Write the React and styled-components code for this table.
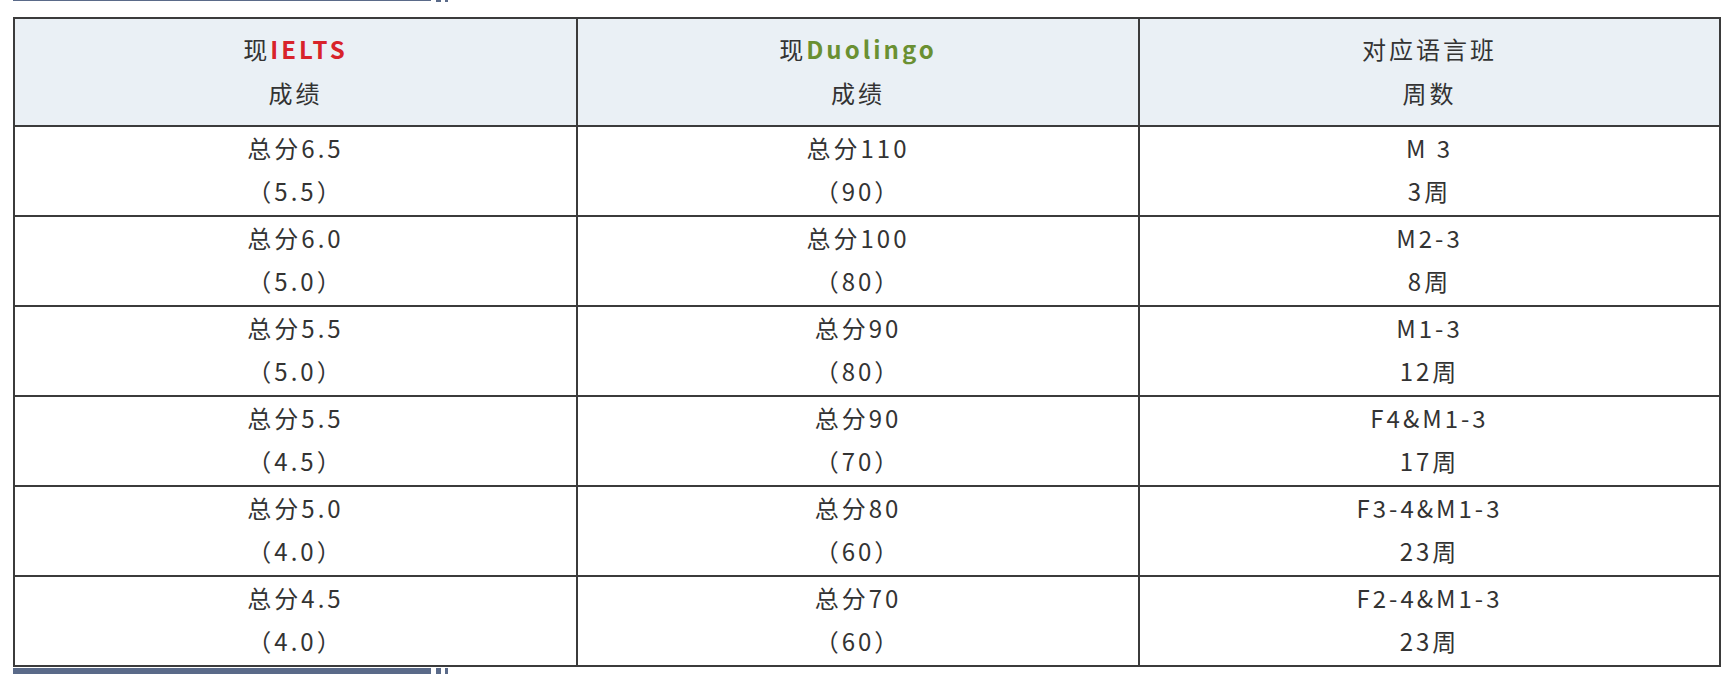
import React from 'react';
import styled, { createGlobalStyle } from 'styled-components';

const GlobalStyle = createGlobalStyle`
  html, body { margin: 0; padding: 0; background: #ffffff; }
  body { font-family: "Noto Sans CJK SC", "Noto Sans", sans-serif; }
`;

const Page = styled.div`
  width: 1732px;
  height: 674px;
  overflow: hidden;
  background: #ffffff;
  box-sizing: border-box;
  padding-left: 13px;
  display: flex;
  flex-direction: column;
`;

const Divider = styled.div`
  display: flex;
  align-items: flex-start;
  height: ${p => p.$h}px;
  margin-top: ${p => p.$mt || 0}px;
  flex-shrink: 0;
`;

const DividerBar = styled.div`
  width: 418px;
  height: ${p => p.$h}px;
  background: #5a6a89;
`;

const DividerMark = styled.div`
  width: ${p => p.$w}px;
  height: 100%;
  margin-left: ${p => p.$ml}px;
  background: #5a6a89;
`;

const Table = styled.div`
  margin-top: ${p => p.$mt}px;
  width: 1708px;
  box-sizing: border-box;
  display: grid;
  grid-template-columns: 561px 560px 579px;
  grid-template-rows: 106px;
  grid-auto-rows: 88px;
  gap: 2px;
  padding: 2px;
  background: #3b3b3b;
  flex-shrink: 0;
`;

const Cell = styled.div`
  background: ${p => (p.$head ? '#eaf0f5' : '#ffffff')};
  display: flex;
  flex-direction: column;
  align-items: center;
  justify-content: center;
  box-sizing: border-box;
  padding-bottom: ${p => (p.$head ? 2 : 5)}px;
  font-size: 24px;
  line-height: ${p => (p.$head ? 44 : 43)}px;
  letter-spacing: 3px;
  color: #333333;
  text-align: center;
`;

const Line = styled.div`
  white-space: nowrap;
`;

const Brand = styled.span`
  font-weight: 700;
  color: ${p => p.$color};
`;

const rows = [
  [['总分6.5', '（5.5）'], ['总分110', '（90）'], ['M 3', '3周']],
  [['总分6.0', '（5.0）'], ['总分100', '（80）'], ['M2-3', '8周']],
  [['总分5.5', '（5.0）'], ['总分90', '（80）'], ['M1-3', '12周']],
  [['总分5.5', '（4.5）'], ['总分90', '（70）'], ['F4&M1-3', '17周']],
  [['总分5.0', '（4.0）'], ['总分80', '（60）'], ['F3-4&M1-3', '23周']],
  [['总分4.5', '（4.0）'], ['总分70', '（60）'], ['F2-4&M1-3', '23周']],
];

export default function App() {
  return (
    <>
      <GlobalStyle />
      <Page>
        <Divider $h={2}>
          <DividerBar $h={1} />
          <DividerMark $w={5} $ml={5} />
          <DividerMark $w={3} $ml={4} />
        </Divider>
        <Table $mt={15}>
          <Cell $head>
            <Line>现<Brand $color="#d8232a">IELTS</Brand></Line>
            <Line>成绩</Line>
          </Cell>
          <Cell $head>
            <Line>现<Brand $color="#6a9032">Duolingo</Brand></Line>
            <Line>成绩</Line>
          </Cell>
          <Cell $head>
            <Line>对应语言班</Line>
            <Line>周数</Line>
          </Cell>
          {rows.map((row, i) =>
            row.map((cell, j) => (
              <Cell key={`${i}-${j}`}>
                <Line>{cell[0]}</Line>
                <Line>{cell[1]}</Line>
              </Cell>
            ))
          )}
        </Table>
        <Divider $h={6} $mt={1}>
          <DividerBar $h={6} />
          <DividerMark $w={5} $ml={5} />
          <DividerMark $w={3} $ml={4} />
        </Divider>
      </Page>
    </>
  );
}
